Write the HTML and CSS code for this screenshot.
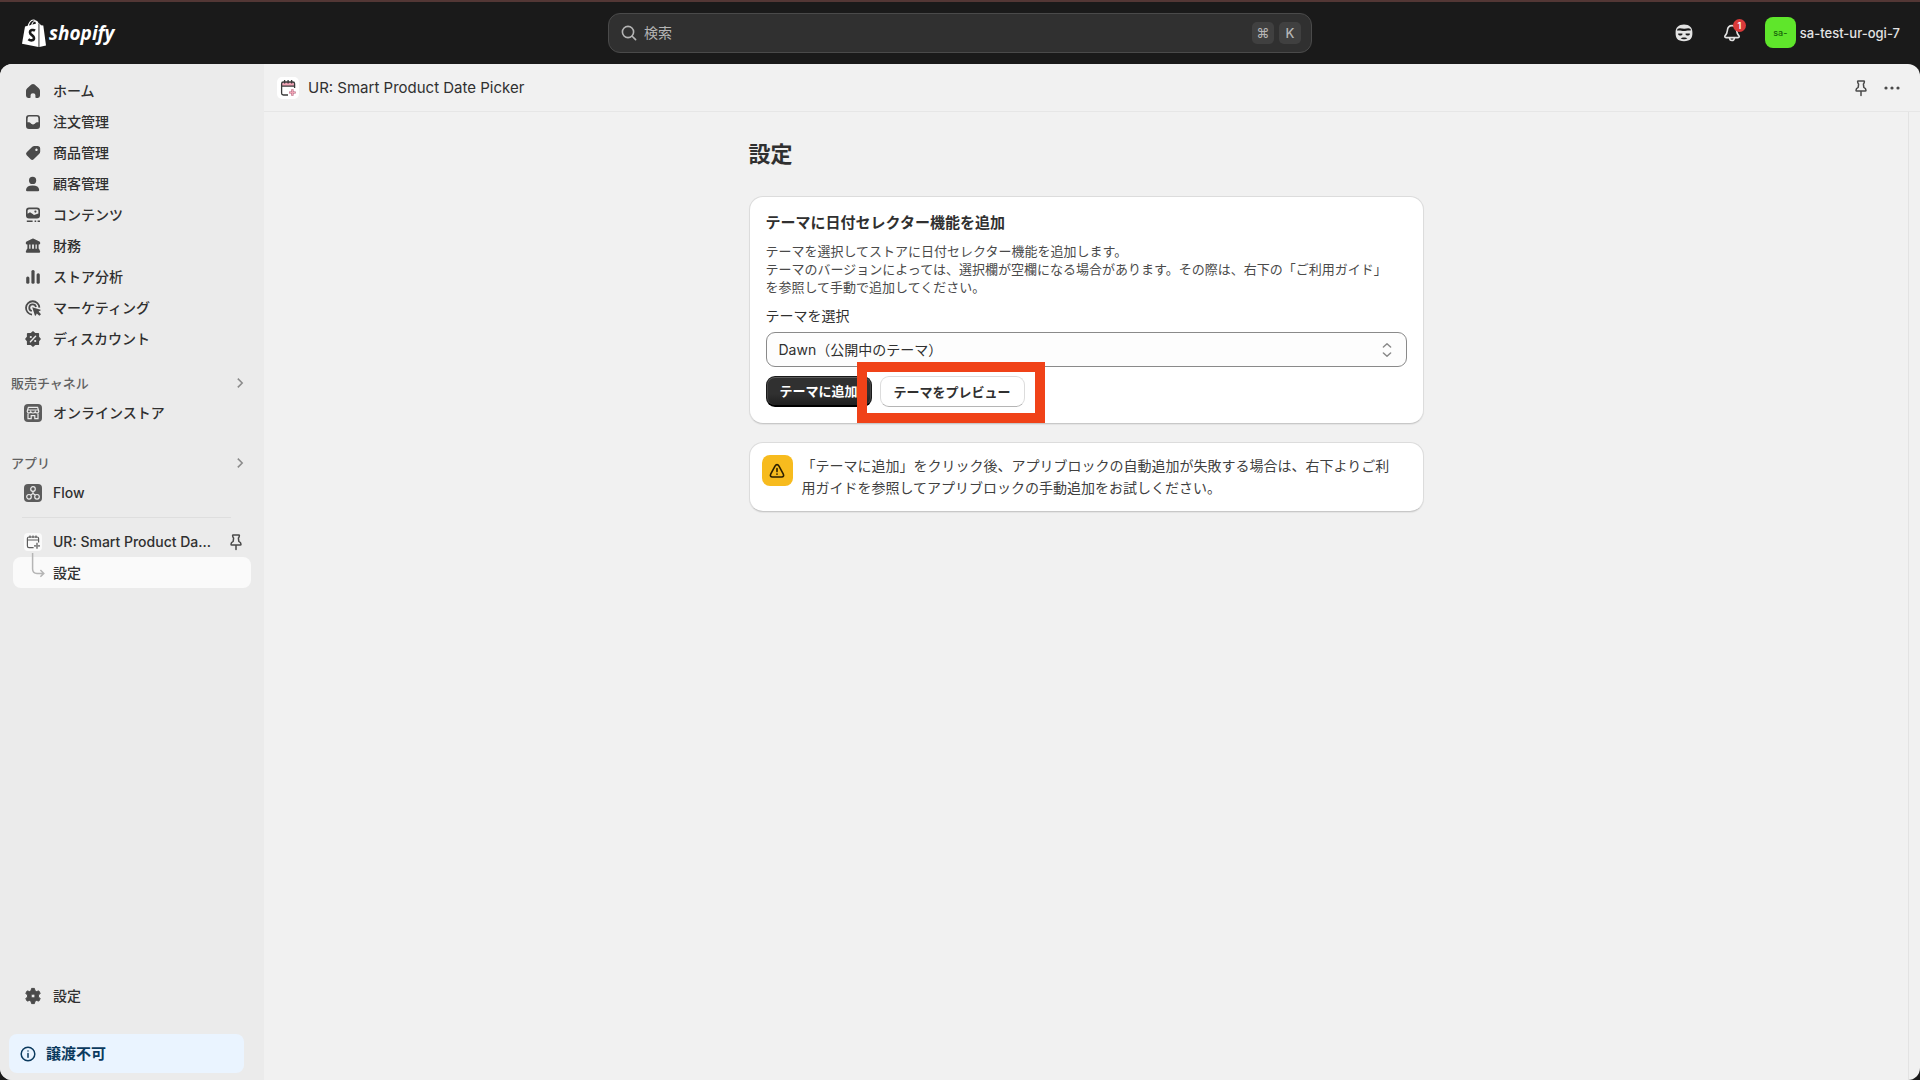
FILE: index.html
```html
<!DOCTYPE html>
<html lang="ja">
<head>
    <meta charset="UTF-8">
    <title>UR: Smart Product Date Picker</title>
    <link rel="stylesheet" href="styles.css">
</head>
<body>
    <header class="topbar">
        <a href="#" class="logo">
            <svg width="24" height="28" viewBox="0 0 24 28">
                <path d="M3 7.5 L16.5 4 V28 L0 24.8 Z" fill="#fff"/>
                <path d="M17.4 4.2 L19 6.2 L21.3 6.6 L24 26.4 L17.4 28 Z" fill="#fff"/>
                <path d="M6 8 C6.6 4 9 1 11.2 1 C13.6 1 14.6 3.6 14.6 6 M9.6 7 C10 4 12 2 13.6 2 C15 2.2 15.8 3.6 16 5" fill="none" stroke="#fff" stroke-width="1.2"/>
                <path d="M13 11.6 C11.4 10.5 8 10.8 8 13.4 C8 16 12 16.2 12 19 C12 21.8 8.6 22 6.4 20.2" fill="none" stroke="#1a1a1a" stroke-width="2.6"/>
            </svg>
            <span>shopify</span>
        </a>
        <label class="search">
            <svg width="20" height="20" viewBox="0 0 20 20" fill="none" stroke="#b5b5b5" stroke-width="1.6" stroke-linecap="round"><circle cx="9" cy="9" r="5.6"/><path d="M13.2 13.2 L16.6 16.6"/></svg>
            <input type="text" placeholder="検索" aria-label="検索">
            <kbd>⌘</kbd>
            <kbd>K</kbd>
        </label>
        <div class="account">
            <button class="icon-btn" aria-label="Sidekick">
                <svg width="20" height="20" viewBox="0 0 20 20">
                    <path d="M10 1.6 C15.4 1.6 18.6 4.6 18.4 9.6 C18.6 15.4 16.4 18.2 10 18.2 C3.6 18.2 1.4 15.4 1.6 9.6 C1.4 4.6 4.6 1.6 10 1.6 Z" fill="#e3e3e3"/>
                    <path d="M3.4 6 C6 4.2 8 6 10.4 5.8 C13 5.6 14.6 4.8 16.6 6 L16.8 7.6 C13.6 7 12 8 10 8 C7.4 8 5.6 7 3.2 7.8 Z" fill="#1a1a1a"/>
                    <path d="M4.2 10.4 H8.4 V11.4 C7.8 12.8 4.8 12.8 4.2 11.4 Z M11.6 10.4 H15.8 V11.4 C15.2 12.8 12.2 12.8 11.6 11.4 Z" fill="#1a1a1a"/>
                    <path d="M6.6 15.6 C7.6 14 12.4 14 13.4 15.6 C12 16.6 8 16.6 6.6 15.6 Z" fill="#1a1a1a"/>
                </svg>
            </button>
            <button class="icon-btn bell" aria-label="通知">
                <svg width="20" height="20" viewBox="0 0 20 20" fill="none" stroke="#e3e3e3" stroke-width="1.6" stroke-linejoin="round">
                    <path d="M10 2.6 C7 2.6 5.6 4.8 5.4 7.4 C5.2 10 4.6 11 3.2 12.6 C2.4 13.6 2.8 14.6 4 14.6 H16 C17.2 14.6 17.6 13.6 16.8 12.6 C15.4 11 14.8 10 14.6 7.4 C14.4 4.8 13 2.6 10 2.6 Z"/>
                    <path d="M7.6 14.8 C7.6 18.4 12.4 18.4 12.4 14.8"/>
                </svg>
                <span class="badge">1</span>
            </button>
            <button class="store">
                <span class="avatar">sa-</span>
                <span>sa-test-ur-ogi-7</span>
            </button>
        </div>
    </header>

    <div class="frame">
        <nav class="sidebar">
            <ul class="nav-list">
                <li><a href="#"><svg viewBox="0 0 20 20"><path d="M8.4 3.6 a2.4 2.4 0 0 1 3.2 0 L15.8 7.2 Q17 8.3 17 9.8 V14.6 Q17 17 14.8 17 H13.2 Q12.4 17 12.4 16.2 V14 Q12.4 12.2 10 12.2 Q7.6 12.2 7.6 14 V16.2 Q7.6 17 6.8 17 H5.2 Q3 17 3 14.6 V9.8 Q3 8.3 4.2 7.2 Z"/></svg>ホーム</a></li>
                <li><a href="#"><svg viewBox="0 0 20 20"><path fill-rule="evenodd" d="M6 3 H14 Q17 3 17 6 V14 Q17 17 14 17 H6 Q3 17 3 14 V6 Q3 3 6 3 Z M6.2 4.6 Q4.9 4.6 4.7 6 L4.5 10.2 H6 Q7 10.2 7.5 11 Q8.3 12.4 10 12.4 Q11.7 12.4 12.5 11 Q13 10.2 14 10.2 H15.5 L15.3 6 Q15.1 4.6 13.8 4.6 Z"/></svg>注文管理</a></li>
                <li><a href="#"><svg viewBox="0 0 20 20"><path fill-rule="evenodd" d="M11.4 3 H14.4 Q17.2 3 17.2 5.8 V8.6 Q17.2 9.8 16.3 10.7 L10.7 16.3 Q9.2 17.7 7.7 16.3 L3.7 12.3 Q2.3 10.8 3.7 9.3 L9.3 3.8 Q10.2 3 11.4 3 Z M13.4 5.6 a1.2 1.2 0 1 0 .1 0 Z"/></svg>商品管理</a></li>
                <li><a href="#"><svg viewBox="0 0 20 20"><circle cx="9.6" cy="6.4" r="3.6"/><path d="M3 16 Q3.4 11.6 9.6 11.6 Q15.8 11.6 16.2 16 Q16.2 17.2 15 17.2 H4.2 Q3 17.2 3 16 Z"/></svg>顧客管理</a></li>
                <li><a href="#"><svg viewBox="0 0 20 20"><path fill-rule="evenodd" d="M6 2.6 H14 Q17 2.6 17 5.6 V10.4 Q17 13.4 14 13.4 H6 Q3 13.4 3 10.4 V5.6 Q3 2.6 6 2.6 Z M4.6 8.8 L7 7.2 L9.4 8.8 L11 10 L15.4 8.4 V5.8 Q15.4 4.2 13.8 4.2 H6.2 Q4.6 4.2 4.6 5.8 Z"/><circle cx="12.4" cy="6.6" r="1.1"/><path d="M3.8 15.4 H9.6 V17 H3.8 Z M11.6 15.4 H13.2 V17 H11.6 Z M14.6 15.4 H17 V17 H14.6 Z"/></svg>コンテンツ</a></li>
                <li><a href="#"><svg viewBox="0 0 20 20"><path d="M9.2 2.8 Q10 2.4 10.8 2.8 L16.4 5.6 Q17.2 6 17.2 7 V7.6 Q17.2 8.4 16.2 8.4 H3.8 Q2.8 8.4 2.8 7.6 V7 Q2.8 6 3.6 5.6 Z M4.4 8 H6.2 V13 H4.4 Z M7.5 8 H9.1 V13 H7.5 Z M10.9 8 H12.5 V13 H10.9 Z M13.8 8 H15.6 V13 H13.8 Z M4 12.8 H16 L17.2 15.4 Q17.4 16.8 16 16.8 H4 Q2.6 16.8 2.8 15.4 Z"/></svg>財務</a></li>
                <li><a href="#"><svg viewBox="0 0 20 20"><rect x="3.2" y="9.4" width="3.2" height="7.4" rx="1.5"/><rect x="8.4" y="3" width="3.2" height="13.8" rx="1.5"/><rect x="13.6" y="6.2" width="3.2" height="10.6" rx="1.5"/></svg>ストア分析</a></li>
                <li><a href="#"><svg viewBox="0 0 20 20"><path class="line" d="M16.4 9.6 A6.7 6.7 0 1 0 9 16.6 M13 9 A3.4 3.4 0 1 0 8.8 13"/><path d="M9.2 9.2 L17.6 11.8 Q18 12.4 17.4 12.6 L15.6 13.6 L18 16.2 L16.4 17.8 L13.8 15.4 L12.8 17.4 Q12 18 11.8 17.2 Z"/></svg>マーケティング</a></li>
                <li><a href="#"><svg viewBox="0 0 20 20"><path d="M10 2 L12.3 3.9 L15.3 3.9 Q16.1 4 16.1 4.8 L16.1 7.7 L18 10 L16.1 12.3 L16.1 15.2 Q16 16.1 15.2 16.1 L12.3 16.1 L10 18 L7.7 16.1 L4.8 16.1 Q3.9 16 3.9 15.2 L3.9 12.3 L2 10 L3.9 7.7 L3.9 4.8 Q4 3.9 4.8 3.9 L7.7 3.9 Z"/><path d="M7.4 12.8 L12.6 7.2" stroke="#ebebeb" stroke-width="1.4" stroke-linecap="round"/><circle cx="7.8" cy="8" r="1.1" fill="#ebebeb"/><circle cx="12.2" cy="12" r="1.1" fill="#ebebeb"/></svg>ディスカウント</a></li>
            </ul>

            <section class="nav-section">
                <h2>販売チャネル<svg viewBox="0 0 20 20"><path class="thin" d="M7.8 5.6 L12.2 10 L7.8 14.4"/></svg></h2>
                <ul class="nav-list">
                    <li><a href="#"><svg viewBox="0 0 20 20"><rect x="1" y="1" width="18" height="18" rx="4" fill="#5c5c5c"/><path d="M5.4 4.4 H14.6 L15.8 8.4 Q15.6 10 14 10 Q12.6 10 12.2 8.8 Q11.6 10 10 10 Q8.4 10 7.8 8.8 Q7.4 10 6 10 Q4.4 10 4.2 8.4 Z M5 10.4 V15.6 H8.2 V12.6 H11.8 V15.6 H15 V10.4 M5 7 H15" fill="none" stroke="#ebebeb" stroke-width="1.2"/></svg>オンラインストア</a></li>
                </ul>
            </section>

            <section class="nav-section">
                <h2>アプリ<svg viewBox="0 0 20 20"><path class="thin" d="M7.8 5.6 L12.2 10 L7.8 14.4"/></svg></h2>
                <ul class="nav-list">
                    <li><a href="#"><svg viewBox="0 0 20 20"><rect x="1" y="1" width="18" height="18" rx="4" fill="#5c5c5c"/><path d="M10 8.2 V10.4 L7.4 12.2 M10 10.4 L12.6 12.2" fill="none" stroke="#ebebeb" stroke-width="1.2"/><g fill="#5c5c5c" stroke="#ebebeb" stroke-width="1.2"><circle cx="10" cy="6" r="2.3"/><circle cx="6" cy="13.8" r="2.3"/><circle cx="14" cy="13.8" r="2.3"/></g></svg>Flow</a></li>
                </ul>
            </section>

            <hr>

            <ul class="nav-list">
                <li><a href="#" class="pinned">
                    <svg viewBox="0 0 20 20"><rect x="1" y="1" width="18" height="18" rx="4" fill="#fafafa"/><g fill="none" stroke="#5c5c5c" stroke-width="1.2"><path d="M10.6 15.6 H6 Q4.4 15.6 4.4 14 V6.6 Q4.4 5 6 5 H14 Q15.6 5 15.6 6.6 V10.4 M4.4 8 H15.6 M7 3.6 V6 M10 3.6 V6 M13 3.6 V6"/><path d="M14 10.8 V16.8 M11 13.8 H17" stroke="#8a8a8a" stroke-width="1.8"/></g></svg>
                    <span>UR: Smart Product Da...</span>
                    <svg viewBox="0 0 20 20"><path class="pin" d="M6.6 3.6 Q6.6 3 7.2 3 H12.8 Q13.4 3 13.4 3.6 Q13.4 5.2 12.4 6 L12.8 9.4 Q15 10.4 15 12.2 Q15 13 14.2 13 H5.8 Q5 13 5 12.2 Q5 10.4 7.2 9.4 L7.6 6 Q6.6 5.2 6.6 3.6 Z M10 13 V17.4"/></svg>
                </a></li>
                <li><a href="#" class="active"><svg class="branch" viewBox="0 0 20 25"><path d="M9.6 0 V16 Q9.6 20.4 14 20.4 H20.4 M17.4 17 L20.8 20.4 L17.4 23.8"/></svg>設定</a></li>
            </ul>

            <div class="sidebar-foot">
                <ul class="nav-list">
                    <li><a href="#"><svg viewBox="0 0 20 20"><path fill-rule="evenodd" d="M8.6 2.4 H11.4 L12 4.8 L13.4 5.6 L15.8 4.9 L17.2 7.3 L15.5 9.1 V10.9 L17.2 12.7 L15.8 15.1 L13.4 14.4 L12 15.2 L11.4 17.6 H8.6 L8 15.2 L6.6 14.4 L4.2 15.1 L2.8 12.7 L4.5 10.9 V9.1 L2.8 7.3 L4.2 4.9 L6.6 5.6 L8 4.8 Z M10 8 a2 2 0 1 0 .1 0 Z" stroke="#4a4a4a" stroke-width="1" stroke-linejoin="round"/></svg>設定</a></li>
                </ul>
                <a href="#" class="notice"><svg width="20" height="20" viewBox="0 0 20 20" fill="none" stroke="#0b3a5e" stroke-width="1.5" stroke-linecap="round"><circle cx="10" cy="10" r="6.8"/><path d="M10 9.6 V13.2 M10 6.9 V7"/></svg>譲渡不可</a>
            </div>
        </nav>

        <main class="main">
            <div class="app-bar">
                <svg width="22" height="22" viewBox="0 0 22 22"><rect width="22" height="22" rx="5" fill="#fff"/><path d="M5 9 V7 Q5 5 7 5 H15 Q17 5 17 7 V9 Z" fill="#f0a3b5"/><g fill="none" stroke="#3a3a3a" stroke-width="1.3"><path d="M11 18 H6.4 Q4.6 18 4.6 16.2 V6.8 Q4.6 5 6.4 5 H15.8 Q17.6 5 17.6 6.8 V11 M4.6 9.2 H17.6 M7.6 3 V6.4 M11.1 3 V6.4 M14.6 3 V6.4"/><path d="M15.4 12.2 V18.8 M12.1 15.5 H18.7" stroke="#b0607a" stroke-width="2.2"/><path d="M15.4 12.6 V18.4 M12.5 15.5 H18.3" stroke="#f0a3b5" stroke-width="1.2"/></g></svg>
                <h1>UR: Smart Product Date Picker</h1>
                <button class="icon-btn" aria-label="ピン留め"><svg width="20" height="20" viewBox="0 0 20 20"><path class="pin" d="M6.6 3.6 Q6.6 3 7.2 3 H12.8 Q13.4 3 13.4 3.6 Q13.4 5.2 12.4 6 L12.8 9.4 Q15 10.4 15 12.2 Q15 13 14.2 13 H5.8 Q5 13 5 12.2 Q5 10.4 7.2 9.4 L7.6 6 Q6.6 5.2 6.6 3.6 Z M10 13 V17.4"/></svg></button>
                <button class="icon-btn" aria-label="その他"><svg width="20" height="20" viewBox="0 0 20 20" fill="#4a4a4a"><circle cx="4" cy="10" r="1.6"/><circle cx="10" cy="10" r="1.6"/><circle cx="16" cy="10" r="1.6"/></svg></button>
            </div>

            <div class="content">
                <div class="page">
                    <h2 class="page-title">設定</h2>

                    <section class="card theme-card">
                        <h3>テーマに日付セレクター機能を追加</h3>
                        <p>テーマを選択してストアに日付セレクター機能を追加します。<br>テーマのバージョンによっては、選択欄が空欄になる場合があります。その際は、右下の「ご利用ガイド」<br>を参照して手動で追加してください。</p>
                        <label for="theme">テーマを選択</label>
                        <div class="select">
                            <select id="theme">
                                <option>Dawn（公開中のテーマ）</option>
                            </select>
                            <svg width="20" height="20" viewBox="0 0 20 20" fill="none" stroke="#8a8a8a" stroke-width="1.5" stroke-linecap="round" stroke-linejoin="round"><path d="M6.4 7 L10 3.8 L13.6 7 M6.4 13 L10 16.2 L13.6 13"/></svg>
                        </div>
                        <div class="actions">
                            <button class="btn btn-primary">テーマに追加</button>
                            <div class="highlight">
                                <button class="btn">テーマをプレビュー</button>
                            </div>
                        </div>
                    </section>

                    <section class="card alert">
                        <span class="alert-icon">
                            <svg width="20" height="20" viewBox="0 0 20 20" fill="none" stroke="#2d2000" stroke-width="1.6" stroke-linecap="round" stroke-linejoin="round"><path d="M10 3.6 C9 3.6 8.5 4.2 8 5.1 L3.8 12.8 C2.8 14.8 3.6 16 5.4 16 H14.6 C16.4 16 17.2 14.8 16.2 12.8 L12 5.1 C11.5 4.2 11 3.6 10 3.6 Z M10 7.6 V10.6 M10 13.1 V13.2"/></svg>
                        </span>
                        <p>「テーマに追加」をクリック後、アプリブロックの自動追加が失敗する場合は、右下よりご利用ガイドを参照してアプリブロックの手動追加をお試しください。</p>
                    </section>
                </div>
            </div>
        </main>
    </div>
</body>
</html>
```
FILE: styles.css
```css
* {
    box-sizing: border-box;
}
body {
    margin: 0;
    height: 100vh;
    display: flex;
    flex-direction: column;
    background: #1a1a1a;
    border-top: 2px solid #533735;
    color: #303030;
    font-family: Inter, "Noto Sans CJK JP", sans-serif;
    font-size: 14px;
    line-height: 20px;
}
h1, h2, h3, p, ul {
    margin: 0;
    padding: 0;
}
ul {
    list-style: none;
}
a {
    color: inherit;
    text-decoration: none;
}
button, input, select {
    font: inherit;
    color: inherit;
}
svg {
    flex: none;
}

/* top bar */
.topbar {
    display: grid;
    grid-template-columns: 1fr minmax(300px, 704px) 1fr;
    align-items: center;
    height: 62px;
    padding: 0 20px 1px;
}
.logo {
    display: flex;
    align-items: center;
    gap: 3px;
    padding-left: 2px;
    color: #fff;
    font-family: "Open Sans", sans-serif;
    font-size: 19px;
    font-weight: 700;
    font-style: italic;
    line-height: 28px;
}
.search {
    display: flex;
    align-items: center;
    gap: 5px;
    height: 40px;
    padding: 0 10px;
    background: #303030;
    border: 1px solid #4a4a4a;
    border-radius: 12px;
}
.search input {
    flex: 1;
    min-width: 0;
    padding: 0;
    border: 0;
    outline: 0;
    background: none;
}
.search input::placeholder {
    color: #b5b5b5;
}
.search kbd {
    width: 22px;
    height: 22px;
    background: #404040;
    border-radius: 5px;
    color: #b5b5b5;
    font: 500 13px/22px Inter, "DejaVu Sans", sans-serif;
    text-align: center;
}
.account {
    display: flex;
    align-items: center;
    justify-content: flex-end;
    color: #e3e3e3;
}
.icon-btn {
    display: flex;
    padding: 0;
    border: 0;
    background: none;
    cursor: pointer;
}
.bell {
    position: relative;
    margin: 0 23px 0 28px;
}
.badge {
    position: absolute;
    top: -4px;
    right: -4px;
    width: 13px;
    height: 13px;
    border-radius: 50%;
    background: #d93a3a;
    color: #fff;
    font-size: 9px;
    font-weight: 600;
    line-height: 13px;
    text-align: center;
}
.store {
    display: flex;
    align-items: center;
    gap: 4px;
    padding: 0;
    border: 0;
    background: none;
    font-size: 13px;
    font-weight: 500;
}
.avatar {
    width: 31px;
    height: 31px;
    border-radius: 8px;
    background: #5fe62b;
    color: #17630a;
    font-size: 9px;
    line-height: 31px;
}

/* frame */
.frame {
    flex: 1;
    min-height: 0;
    display: flex;
    background: #f1f1f1;
    border-radius: 12px;
    overflow: hidden;
}
.sidebar {
    display: flex;
    flex-direction: column;
    width: 264px;
    padding-top: 11px;
    background: #ebebeb;
}
.nav-list {
    margin: 0 13px;
}
.nav-list a {
    position: relative;
    display: flex;
    align-items: center;
    gap: 10px;
    height: 31px;
    padding-left: 10px;
    border-radius: 8px;
    font-weight: 500;
}
.sidebar svg {
    width: 20px;
    height: 20px;
    fill: #4a4a4a;
}
.sidebar .line {
    fill: none;
    stroke: #4a4a4a;
    stroke-width: 1.8;
}
.sidebar .thin {
    fill: none;
    stroke: #8a8a8a;
    stroke-width: 1.5;
}
.pin {
    fill: none;
    stroke: #4a4a4a;
    stroke-width: 1.5;
    stroke-linejoin: round;
    stroke-linecap: round;
}
.nav-section {
    margin-top: 14px;
}
.nav-section + .nav-section {
    margin-top: 20px;
}
.nav-section h2 {
    display: flex;
    align-items: center;
    justify-content: space-between;
    height: 29px;
    padding: 0 14px 0 11px;
    color: #616161;
    font-size: 13px;
    font-weight: 500;
}
.sidebar hr {
    width: 209px;
    margin: 9px 0 8px 22px;
    border: 0;
    border-top: 1px solid #dedede;
}
.nav-list .pinned {
    padding-right: 5px;
}
.pinned span {
    flex: 1;
    white-space: nowrap;
}
.nav-list .active {
    padding-left: 40px;
    background: #fafafa;
}
.sidebar .branch {
    position: absolute;
    left: 10px;
    top: -4px;
    height: 25px;
    overflow: visible;
    fill: none;
    stroke: #b5b5b5;
    stroke-width: 1.5;
}
.sidebar-foot {
    margin-top: auto;
}
.notice {
    display: flex;
    align-items: center;
    gap: 8px;
    height: 39px;
    margin: 23px 20px 7px 9px;
    padding-left: 9px;
    border-radius: 8px;
    background: #eaf4ff;
    color: #0b3a5e;
    font-size: 15px;
    font-weight: 600;
}
.sidebar .notice svg {
    fill: none;
}

/* app area */
.main {
    flex: 1;
    display: flex;
    flex-direction: column;
}
.app-bar {
    display: flex;
    align-items: center;
    gap: 11px;
    height: 48px;
    padding: 0 18px 0 13px;
    border-bottom: 1px solid #e6e6e6;
}
.app-bar h1 {
    flex: 1;
    margin-left: -2px;
    font-size: 15px;
    font-weight: 400;
}
.content {
    flex: 1;
    margin-right: 11px;
    padding: 28px 20px;
    border-right: 1px solid #e3e3e3;
}
.page {
    max-width: 675px;
    margin: 0 auto;
}
.page-title {
    margin-bottom: 28px;
    font-size: 22px;
    font-weight: 600;
    line-height: 28px;
}
.card {
    background: #fff;
    border: 1px solid #dcdcdc;
    border-bottom-color: #c8c8c8;
    border-radius: 14px;
    box-shadow: 0 1px 1px rgba(0, 0, 0, 0.06);
}
.theme-card {
    padding: 16px;
}
.theme-card h3 {
    font-size: 15px;
    font-weight: 600;
}
.theme-card p {
    margin: 9px 0 10px;
    color: #4a4a4a;
    font-size: 13px;
    line-height: 18px;
}
.theme-card label {
    display: block;
    margin-bottom: 6px;
}
.select {
    position: relative;
}
.select select {
    display: block;
    width: 100%;
    height: 35px;
    padding: 0 12px;
    appearance: none;
    background: #fdfdfd;
    border: 1px solid #8a8a8a;
    border-radius: 9px;
}
.select svg {
    position: absolute;
    top: 8px;
    right: 10px;
    pointer-events: none;
}
.actions {
    display: flex;
    gap: 8px;
    margin-top: 9px;
}
.btn {
    display: block;
    height: 31px;
    padding: 0 13px;
    background: #fff;
    border: 1px solid #dcdcdc;
    border-bottom-color: #b5b5b5;
    border-radius: 9px;
    font-size: 13px;
    font-weight: 600;
    cursor: pointer;
}
.btn-primary {
    background: linear-gradient(#303030 60%, #1f1f1f);
    border: 1px solid #1a1a1a;
    border-bottom: 2px solid #000;
    box-shadow: inset 0 1px 0 #5c5c5c, inset 1px 0 0 #454545, inset -1px 0 0 #454545;
    color: #fff;
}
.highlight {
    position: relative;
}
.highlight::after {
    content: "";
    position: absolute;
    top: -14px;
    right: -20px;
    bottom: -16px;
    left: -23px;
    border: 10px solid #f04218;
    pointer-events: none;
}
.alert {
    display: flex;
    gap: 9px;
    margin-top: 18px;
    padding: 12px 20px 12px 12px;
}
.alert-icon {
    display: flex;
    align-items: center;
    justify-content: center;
    flex: none;
    width: 31px;
    height: 31px;
    border-radius: 8px;
    background: #f7bb1e;
}
.alert p {
    color: #404040;
    line-height: 22px;
}
```
